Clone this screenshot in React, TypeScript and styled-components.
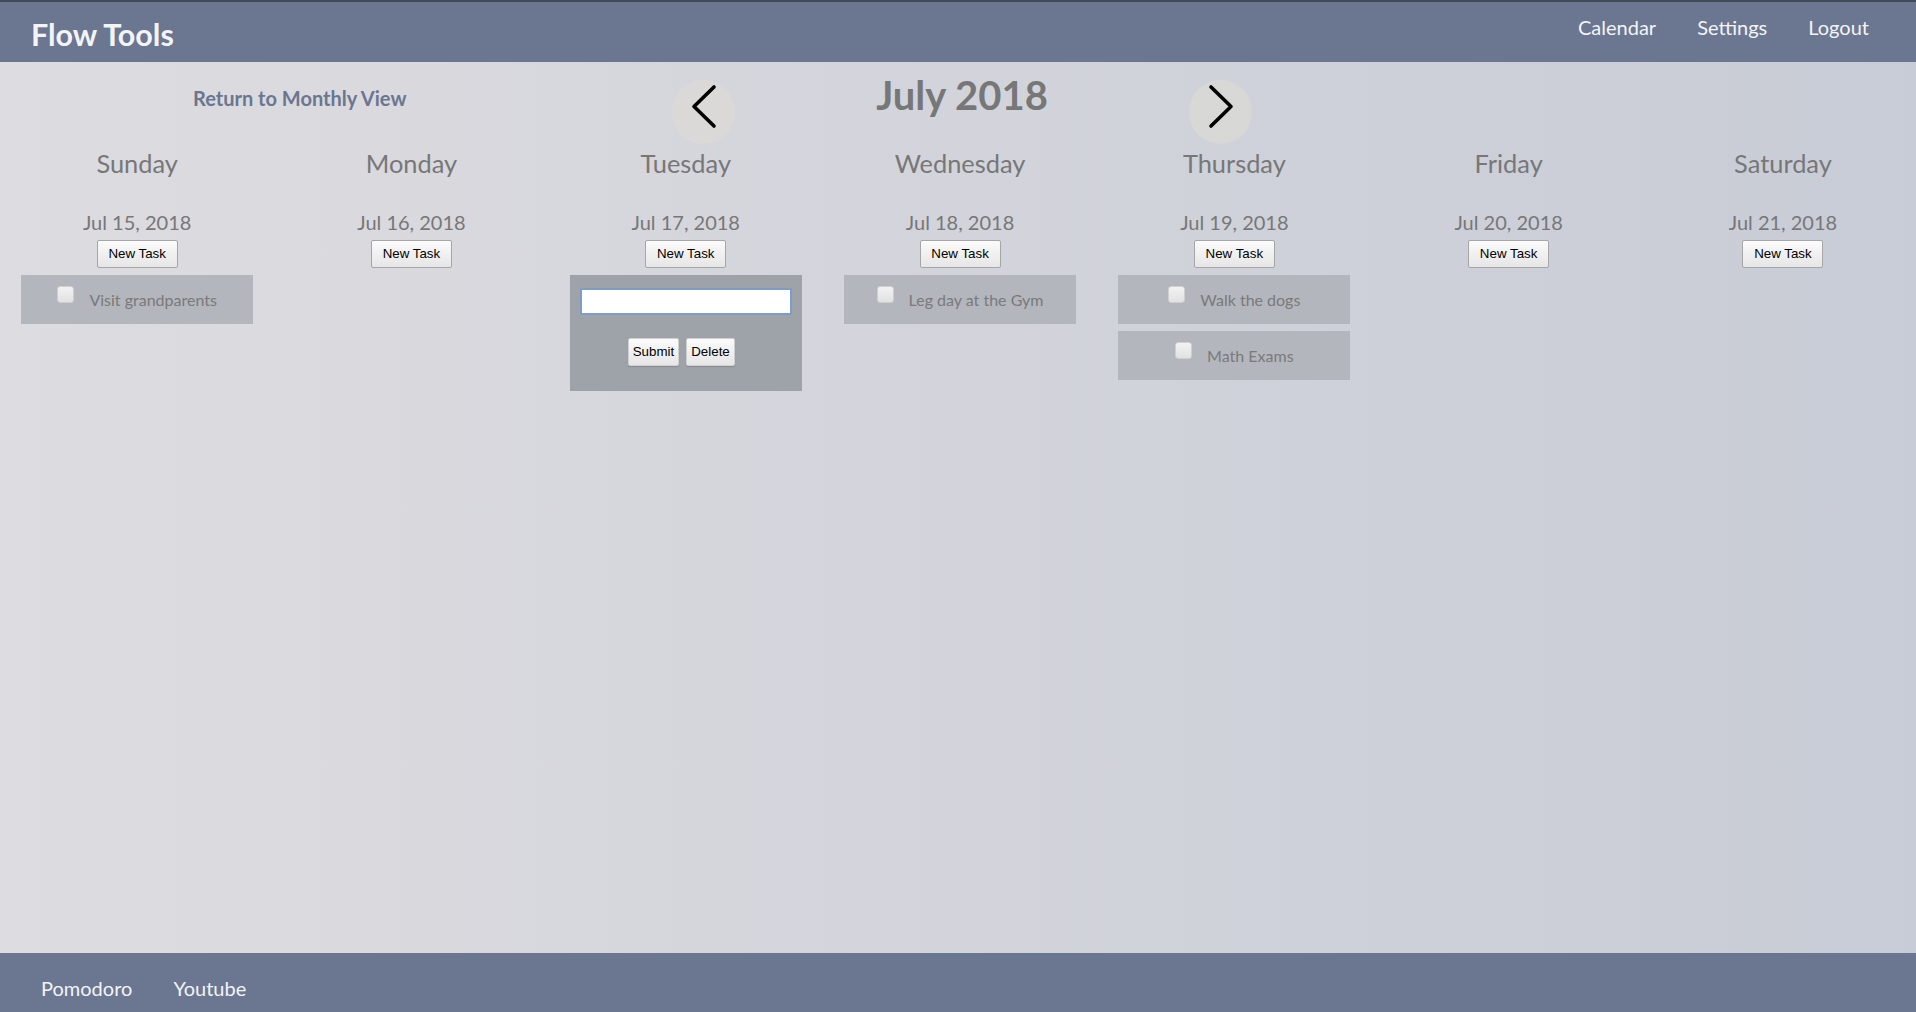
import styled, { createGlobalStyle } from "styled-components";

const GlobalStyle = createGlobalStyle`
  html, body {
    margin: 0;
    padding: 0;
    height: 100%;
  }
  body {
    font-family: Lato, "Open Sans", sans-serif;
    background: linear-gradient(to right, #dddce0, #c8ccd6);
    overflow-x: hidden;
  }
  #root {
    min-height: 100vh;
    display: flex;
    flex-direction: column;
  }
`;

const StyledHeader = styled.header`
  display: flex;
  justify-content: space-between;
  align-items: flex-start;
  border-top: 2px solid #3f4b5b;
  background-color: #6b7690;
  padding: 13px 47px 0 31px;
  box-sizing: content-box;
  height: 47px;
`;

const StyledBrand = styled.div`
  color: #f3f4f8;
  font-size: 30.5px;
  font-weight: 700;
  line-height: 1.2;
  padding-top: 1px;
`;

const StyledNav = styled.nav`
  display: flex;
  gap: 41px;

  a {
    color: #f3f4f8;
    font-size: 20px;
    line-height: 1.2;
    text-decoration: none;
  }
`;

const StyledMain = styled.main`
  flex: 1;
  overflow: hidden;
`;

const StyledTopRow = styled.div`
  display: grid;
  grid-template-columns: 672px 580px 1fr;
  height: 82px;
`;

const StyledReturnLink = styled.a`
  padding-left: 193px;
  padding-top: 24px;
  color: #6b7690;
  font-size: 20px;
  font-weight: 700;
  line-height: 1.2;
  text-decoration: none;
  white-space: nowrap;
`;

const StyledMonthNav = styled.div`
  display: flex;
  justify-content: space-between;
  align-items: flex-start;
`;

const StyledTitle = styled.h1`
  margin: 9px 0 0;
  color: #777777;
  font-size: 40px;
  font-weight: 700;
  line-height: 1.2;
`;

const StyledArrow = styled.button`
  width: 63px;
  height: 64px;
  margin-top: 18px;
  padding: 0;
  border: none;
  border-radius: 50%;
  background-color: rgba(222, 220, 212, 0.55);
  cursor: pointer;

  svg {
    display: block;
  }
`;

const StyledWeek = styled.div`
  display: grid;
  grid-template-columns: repeat(7, 274.3px);
  padding-top: 3.5px;
`;

const StyledDay = styled.div`
  display: flex;
  flex-direction: column;
  align-items: center;
  padding: 0 21px;
`;

const StyledDayName = styled.div`
  color: #777777;
  font-size: 25.4px;
  line-height: 1.2;
  margin-bottom: 32px;
`;

const StyledDate = styled.div`
  color: #777777;
  font-size: 20px;
  line-height: 1.2;
  margin-bottom: 6px;
`;

const StyledButton = styled.button<{ $plain?: boolean }>`
  font-family: "Liberation Sans", Arial, sans-serif;
  font-size: 13.33px;
  color: #000;
  height: 28px;
  padding: 0 ${(p) => (p.$plain ? "4px" : "8px")};
  border: 1px solid ${(p) => (p.$plain ? "#d0d0d0" : "#a6a6a6")};
  border-radius: 2px;
  background: linear-gradient(#fbfbfb, #e6e6e6);
  box-shadow: ${(p) => (p.$plain ? "0 1px 1px rgba(0,0,0,0.15)" : "none")};
`;

const StyledNewTask = styled(StyledButton)`
  width: 81px;
  margin-bottom: 7px;
`;

const StyledTaskList = styled.div`
  display: flex;
  flex-direction: column;
  gap: 7px;
  align-self: stretch;
`;

const StyledTask = styled.label`
  display: flex;
  justify-content: center;
  align-items: center;
  gap: 15px;
  height: 49px;
  background-color: #b3b6bd;
  color: #7a7a7a;
  font-size: 16px;
`;

const StyledCheckbox = styled.input`
  appearance: none;
  width: 17px;
  height: 17px;
  margin: 0 0 9px 0;
  border: 1px solid #cfcfcf;
  border-radius: 3px;
  background: linear-gradient(#f2f2f2, #e2e2e2);
`;

const StyledEditor = styled.form`
  display: flex;
  flex-direction: column;
  align-items: center;
  gap: 23px;
  padding: 13px 10px 25px;
  background-color: #9ea3aa;
`;

const StyledInput = styled.input`
  box-sizing: border-box;
  width: 100%;
  height: 27px;
  border: 2px solid #7f9cc9;
  border-radius: 1px;
  background: #fff;
  outline: none;
`;

const StyledEditorButtons = styled.div`
  display: flex;
  gap: 7px;
  padding-right: 9px;
`;

const StyledFooter = styled.footer`
  display: flex;
  align-items: center;
  gap: 41px;
  height: 59px;
  padding-left: 41px;
  background-color: #6b7690;

  a {
    color: #f3f4f8;
    font-size: 20px;
    text-decoration: none;
    padding-top: 10px;
  }
`;

type Day = {
  name: string;
  date: string;
  tasks: string[];
  editing?: boolean;
};

const days: Day[] = [
  { name: "Sunday", date: "Jul 15, 2018", tasks: ["Visit grandparents"] },
  { name: "Monday", date: "Jul 16, 2018", tasks: [] },
  { name: "Tuesday", date: "Jul 17, 2018", tasks: [], editing: true },
  { name: "Wednesday", date: "Jul 18, 2018", tasks: ["Leg day at the Gym"] },
  { name: "Thursday", date: "Jul 19, 2018", tasks: ["Walk the dogs", "Math Exams"] },
  { name: "Friday", date: "Jul 20, 2018", tasks: [] },
  { name: "Saturday", date: "Jul 21, 2018", tasks: [] },
];

function Chevron({ dir }: { dir: "left" | "right" }) {
  const points = dir === "left" ? "42,7 22,26.5 42,46" : "22,7 42,26.5 22,46";
  return (
    <svg width="63" height="64" viewBox="0 0 63 64">
      <polyline
        points={points}
        fill="none"
        stroke="#000"
        strokeWidth="3.6"
        strokeLinecap="round"
        strokeLinejoin="round"
      />
    </svg>
  );
}

export default function App() {
  return (
    <>
      <GlobalStyle />
      <StyledHeader>
        <StyledBrand>Flow Tools</StyledBrand>
        <StyledNav>
          <a href="#">Calendar</a>
          <a href="#">Settings</a>
          <a href="#">Logout</a>
        </StyledNav>
      </StyledHeader>
      <StyledMain>
        <StyledTopRow>
          <StyledReturnLink href="#">Return to Monthly View</StyledReturnLink>
          <StyledMonthNav>
            <StyledArrow aria-label="Previous week">
              <Chevron dir="left" />
            </StyledArrow>
            <StyledTitle>July 2018</StyledTitle>
            <StyledArrow aria-label="Next week">
              <Chevron dir="right" />
            </StyledArrow>
          </StyledMonthNav>
        </StyledTopRow>
        <StyledWeek>
          {days.map((day) => (
            <StyledDay key={day.name}>
              <StyledDayName>{day.name}</StyledDayName>
              <StyledDate>{day.date}</StyledDate>
              <StyledNewTask>New Task</StyledNewTask>
              <StyledTaskList>
                {day.tasks.map((task) => (
                  <StyledTask key={task}>
                    <StyledCheckbox type="checkbox" />
                    {task}
                  </StyledTask>
                ))}
                {day.editing && (
                  <StyledEditor onSubmit={(e) => e.preventDefault()}>
                    <StyledInput type="text" />
                    <StyledEditorButtons>
                      <StyledButton $plain type="submit">Submit</StyledButton>
                      <StyledButton $plain type="button">Delete</StyledButton>
                    </StyledEditorButtons>
                  </StyledEditor>
                )}
              </StyledTaskList>
            </StyledDay>
          ))}
        </StyledWeek>
      </StyledMain>
      <StyledFooter>
        <a href="#">Pomodoro</a>
        <a href="#">Youtube</a>
      </StyledFooter>
    </>
  );
}
